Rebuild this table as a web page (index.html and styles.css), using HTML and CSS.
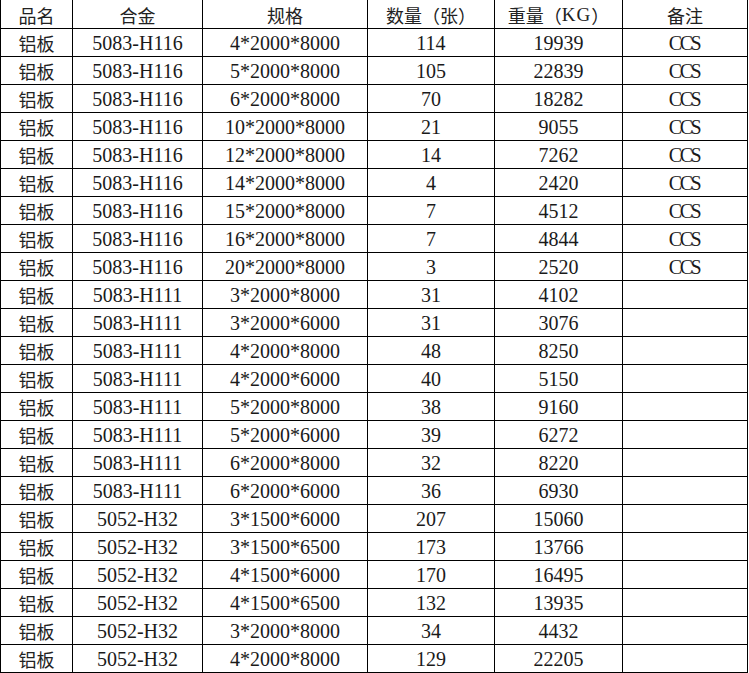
FILE: index.html
```html
<!DOCTYPE html>
<html lang="zh">
<head>
<meta charset="utf-8">
<title>铝板</title>
<link rel="stylesheet" href="styles.css">
</head>
<body>
<div class="sheet">
  <div class="row head"><div class="c cj">品名</div><div class="c cj">合金</div><div class="c cj">规格</div><div class="c cj">数量（张）</div><div class="c cj">重量（<span class="lat">KG</span>）</div><div class="c cj">备注</div></div>
  <div class="row"><div class="c cj">铝板</div><div class="c">5083-H116</div><div class="c">4*2000*8000</div><div class="c">114</div><div class="c">19939</div><div class="c ccs">CCS</div></div>
  <div class="row"><div class="c cj">铝板</div><div class="c">5083-H116</div><div class="c">5*2000*8000</div><div class="c">105</div><div class="c">22839</div><div class="c ccs">CCS</div></div>
  <div class="row"><div class="c cj">铝板</div><div class="c">5083-H116</div><div class="c">6*2000*8000</div><div class="c">70</div><div class="c">18282</div><div class="c ccs">CCS</div></div>
  <div class="row"><div class="c cj">铝板</div><div class="c">5083-H116</div><div class="c">10*2000*8000</div><div class="c">21</div><div class="c">9055</div><div class="c ccs">CCS</div></div>
  <div class="row"><div class="c cj">铝板</div><div class="c">5083-H116</div><div class="c">12*2000*8000</div><div class="c">14</div><div class="c">7262</div><div class="c ccs">CCS</div></div>
  <div class="row"><div class="c cj">铝板</div><div class="c">5083-H116</div><div class="c">14*2000*8000</div><div class="c">4</div><div class="c">2420</div><div class="c ccs">CCS</div></div>
  <div class="row"><div class="c cj">铝板</div><div class="c">5083-H116</div><div class="c">15*2000*8000</div><div class="c">7</div><div class="c">4512</div><div class="c ccs">CCS</div></div>
  <div class="row"><div class="c cj">铝板</div><div class="c">5083-H116</div><div class="c">16*2000*8000</div><div class="c">7</div><div class="c">4844</div><div class="c ccs">CCS</div></div>
  <div class="row"><div class="c cj">铝板</div><div class="c">5083-H116</div><div class="c">20*2000*8000</div><div class="c">3</div><div class="c">2520</div><div class="c ccs">CCS</div></div>
  <div class="row"><div class="c cj">铝板</div><div class="c">5083-H111</div><div class="c">3*2000*8000</div><div class="c">31</div><div class="c">4102</div><div class="c"></div></div>
  <div class="row"><div class="c cj">铝板</div><div class="c">5083-H111</div><div class="c">3*2000*6000</div><div class="c">31</div><div class="c">3076</div><div class="c"></div></div>
  <div class="row"><div class="c cj">铝板</div><div class="c">5083-H111</div><div class="c">4*2000*8000</div><div class="c">48</div><div class="c">8250</div><div class="c"></div></div>
  <div class="row"><div class="c cj">铝板</div><div class="c">5083-H111</div><div class="c">4*2000*6000</div><div class="c">40</div><div class="c">5150</div><div class="c"></div></div>
  <div class="row"><div class="c cj">铝板</div><div class="c">5083-H111</div><div class="c">5*2000*8000</div><div class="c">38</div><div class="c">9160</div><div class="c"></div></div>
  <div class="row"><div class="c cj">铝板</div><div class="c">5083-H111</div><div class="c">5*2000*6000</div><div class="c">39</div><div class="c">6272</div><div class="c"></div></div>
  <div class="row"><div class="c cj">铝板</div><div class="c">5083-H111</div><div class="c">6*2000*8000</div><div class="c">32</div><div class="c">8220</div><div class="c"></div></div>
  <div class="row"><div class="c cj">铝板</div><div class="c">5083-H111</div><div class="c">6*2000*6000</div><div class="c">36</div><div class="c">6930</div><div class="c"></div></div>
  <div class="row"><div class="c cj">铝板</div><div class="c">5052-H32</div><div class="c">3*1500*6000</div><div class="c">207</div><div class="c">15060</div><div class="c"></div></div>
  <div class="row"><div class="c cj">铝板</div><div class="c">5052-H32</div><div class="c">3*1500*6500</div><div class="c">173</div><div class="c">13766</div><div class="c"></div></div>
  <div class="row"><div class="c cj">铝板</div><div class="c">5052-H32</div><div class="c">4*1500*6000</div><div class="c">170</div><div class="c">16495</div><div class="c"></div></div>
  <div class="row"><div class="c cj">铝板</div><div class="c">5052-H32</div><div class="c">4*1500*6500</div><div class="c">132</div><div class="c">13935</div><div class="c"></div></div>
  <div class="row"><div class="c cj">铝板</div><div class="c">5052-H32</div><div class="c">3*2000*8000</div><div class="c">34</div><div class="c">4432</div><div class="c"></div></div>
  <div class="row"><div class="c cj">铝板</div><div class="c">5052-H32</div><div class="c">4*2000*8000</div><div class="c">129</div><div class="c">22205</div><div class="c"></div></div>
</div>
</body>
</html>
```
FILE: styles.css
```css
html, body {
  margin: 0;
  padding: 0;
  background: #ffffff;
}
.sheet {
  width: 748px;
  border-left: 1px solid #000;
  box-sizing: border-box;
  color: #1a1a1a;
  font-family: "Liberation Serif", "Noto Sans CJK SC", serif;
  font-size: 20px;
}
.row {
  display: grid;
  grid-template-columns: 72px 130px 165px 127px 128px 125px;
  height: 28px;
}
.row.head {
  height: 29px;
}
.c {
  box-sizing: border-box;
  border-right: 1px solid #000;
  border-bottom: 1px solid #000;
  display: flex;
  align-items: center;
  justify-content: center;
  white-space: nowrap;
  line-height: 1;
  padding-top: 1px;
}
.cj {
  font-family: "Noto Sans CJK SC", sans-serif;
  font-size: 18px;
  font-weight: 400;
  color: #222;
}
.lat {
  font-family: "Liberation Serif", serif;
  font-size: 19px;
  letter-spacing: 1px;
}
.ccs {
  letter-spacing: -2.5px;
  padding-right: 2px;
}
```
